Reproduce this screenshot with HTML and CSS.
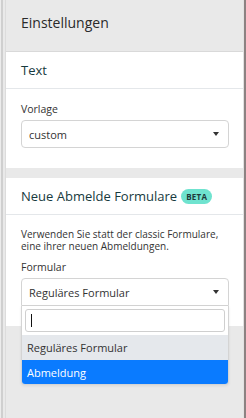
FILE: index.html
```html
<!DOCTYPE html>
<html lang="de">
<head>
    <meta charset="UTF-8">
    <meta name="viewport" content="width=device-width, initial-scale=1.0">
    <title>Einstellungen</title>
    <link rel="stylesheet" href="styles.css">
</head>
<body>
    <div class="rail"></div>
    <aside class="panel">
        <header class="panel-head">Einstellungen</header>

        <section class="box">
            <h2 class="box-title">Text</h2>
            <div class="box-body">
                <label class="field-label">Vorlage</label>
                <div class="select">
                    <span>custom</span>
                    <span class="caret"></span>
                </div>
            </div>
        </section>

        <section class="box">
            <h2 class="box-title">Neue Abmelde Formulare <span class="badge">BETA</span></h2>
            <div class="box-body">
                <p class="hint">Verwenden Sie statt der classic Formulare, eine ihrer neuen Abmeldungen.</p>
                <label class="field-label">Formular</label>
                <div class="select-wrap">
                    <div class="select open">
                        <span>Reguläres Formular</span>
                        <span class="caret"></span>
                    </div>
                    <div class="dropdown">
                        <div class="search"><span class="cursor"></span></div>
                        <ul class="options">
                            <li class="option selected">Reguläres Formular</li>
                            <li class="option active">Abmeldung</li>
                        </ul>
                    </div>
                </div>
            </div>
        </section>
    </aside>
    <div class="edge"></div>
</body>
</html>
```

FILE: styles.css
```css
body {
    margin: 0;
    height: 418px;
    display: flex;
    background-color: #e9e9e9;
    font-family: 'Open Sans', sans-serif;
    color: #333;
    overflow: hidden;
}

.rail {
    width: 5px;
    flex-shrink: 0;
    box-sizing: border-box;
    border-left: 1px solid #ececec;
}

.rail::before {
    content: '';
    display: block;
    width: 2px;
    height: 100%;
    background-color: #cfcfcf;
}

.panel {
    width: 238px;
    flex-shrink: 0;
    border-left: 1px solid #dcdcdc;
    box-sizing: border-box;
}

.edge {
    width: 3px;
    border-left: 1px solid #e2e2e2;
    background-color: #8c8282;
    margin-left: auto;
}

.panel-head {
    height: 52px;
    box-sizing: border-box;
    padding: 0 15px 6px;
    display: flex;
    align-items: center;
    font-size: 14px;
    color: #2a2a2a;
    background-color: #e9e9e9;
    border-bottom: 1px solid #d9d9d9;
}

.box {
    background-color: #fff;
    margin-bottom: 10px;
}

.box-title {
    margin: 0;
    height: 37px;
    box-sizing: border-box;
    padding: 0 15px;
    display: flex;
    align-items: center;
    gap: 4px;
    font-size: 13px;
    font-weight: normal;
    color: #173a3e;
    border-bottom: 1px solid #e4e7ea;
}

.badge {
    background-color: #6fe3cf;
    color: #1f3a3a;
    font-size: 8px;
    font-weight: bold;
    padding: 2px 5px;
    border-radius: 8px;
    letter-spacing: 0.3px;
}

.box-body {
    padding: 13px 14px 20px 15px;
}

.hint {
    margin: 0 0 8px;
    font-size: 10px;
    line-height: 12px;
    color: #333;
}

.field-label {
    display: block;
    font-size: 10.5px;
    line-height: 14px;
    margin-bottom: 4px;
    color: #333;
}

.select {
    height: 28px;
    box-sizing: border-box;
    border: 1px solid #d4d4d4;
    border-radius: 4px;
    padding: 0 9px 0 7px;
    display: flex;
    align-items: center;
    justify-content: space-between;
    font-size: 11px;
    color: #333;
}

.select.open {
    border-radius: 4px 4px 0 0;
}

.caret {
    width: 0;
    height: 0;
    border-left: 3.5px solid transparent;
    border-right: 3.5px solid transparent;
    border-top: 4px solid #333;
}

.select-wrap {
    position: relative;
}

.dropdown {
    position: absolute;
    top: 28px;
    left: 0;
    right: 0;
    background-color: #fff;
    border: 1px solid #d4d4d4;
    border-top: none;
    border-radius: 0 0 4px 4px;
    box-shadow: 0 1px 3px rgba(0, 0, 0, 0.08);
    overflow: hidden;
}

.search {
    margin: 3px 3px;
    height: 23px;
    box-sizing: border-box;
    border: 1px solid #cfcfcf;
    border-radius: 3px;
    display: flex;
    align-items: center;
    padding-left: 5px;
}

.cursor {
    width: 1px;
    height: 13px;
    background-color: #111;
}

.options {
    list-style: none;
    margin: 0;
    padding: 0;
}

.option {
    height: 25px;
    display: flex;
    align-items: center;
    padding: 0 5px;
    font-size: 11px;
    color: #333;
}

.option.selected {
    background-color: #e5e8ec;
}

.option.active {
    height: 24px;
    background-color: #0a7bff;
    color: #fff;
}
```
